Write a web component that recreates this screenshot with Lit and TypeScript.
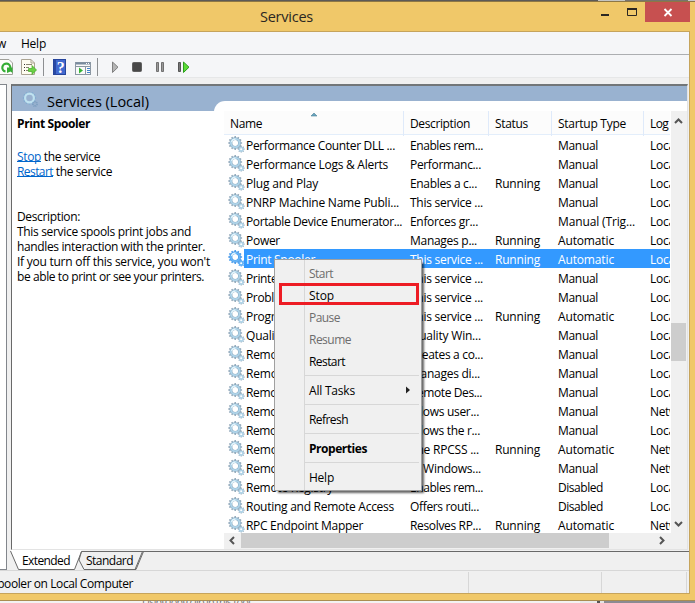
import { LitElement, html, css, svg, nothing } from "lit";
import { customElement, property } from "lit/decorators.js";
import { classMap } from "lit/directives/class-map.js";

/** A single line of text whose letter spacing is adjusted to fill `w` pixels. */
@customElement("fit-text")
class FitText extends LitElement {
  static styles = css`
    :host { display: inline-block; white-space: pre; }
  `;
  @property({ type: Number }) w = 0;
  @property() text = "";
  render() {
    return html`<span>${this.text}</span>`;
  }
  firstUpdated() {
    const span = this.renderRoot.querySelector("span")!;
    const natural = span.getBoundingClientRect().width;
    if (this.w && natural) {
      span.style.letterSpacing = (this.w - natural) / this.text.length + "px";
    }
  }
}

const t = (text: string, w: number) => html`<fit-text .text=${text} .w=${w}></fit-text>`;

const teeth = (n: number, cx: number, cy: number, r1: number, r2: number) =>
  Array.from({ length: n }, (_, i) => {
    const a = (i * 2 * Math.PI) / n;
    return `M${cx + r1 * Math.cos(a)} ${cy + r1 * Math.sin(a)}L${cx + r2 * Math.cos(a)} ${cy + r2 * Math.sin(a)}`;
  }).join("");

@customElement("gear-icon")
class GearIcon extends LitElement {
  static properties = { hot: { type: Boolean } };
  declare hot: boolean;
  static styles = css`
    :host { display: block; width: 17px; height: 17px; }
    svg { display: block; }
  `;
  render() {
    const edge = this.hot ? "#4a9cec" : "#93a9ba";
    const ring = this.hot ? "#66b4f6" : "#aed3e8";
    const rim = this.hot ? "#3a8de0" : "#7f9fb6";
    return html`<svg width="17" height="17" viewBox="0 0 17 17" fill="none">
      <path d=${teeth(12, 7.2, 7, 5, 6.9)} stroke=${edge} stroke-width="1.5" />
      <circle cx="7.2" cy="7" r="4.3" stroke=${rim} stroke-width="2.8" />
      <circle cx="7.2" cy="7" r="4.3" stroke=${ring} stroke-width="2" />
      <path d="M3.6 6a3.8 3.8 0 0 1 4-2.8" stroke="#e4f5fc" stroke-width="1.3" />
      <path d=${teeth(8, 13.2, 13.2, 1.6, 3.4)} stroke=${edge} stroke-width="1.2" />
      <circle cx="13.2" cy="13.2" r="1.8" stroke=${ring} stroke-width="1.5" />
    </svg>`;
  }
}

type Row = [string, number, string, number, string, string, string];
const rows: Row[] = [
  ["Performance Counter DLL ...", 149, "Enables rem...", 73, "", "Manual", "Loca"],
  ["Performance Logs & Alerts", 142, "Performanc...", 71, "", "Manual", "Loca"],
  ["Plug and Play", 72, "Enables a c...", 67, "Running", "Manual", "Loca"],
  ["PNRP Machine Name Publi...", 153, "This service ...", 73, "", "Manual", "Loca"],
  ["Portable Device Enumerator...", 156, "Enforces gr...", 68, "", "Manual (Trig...", "Loca"],
  ["Power", 34, "Manages p...", 67, "Running", "Automatic", "Loca"],
  ["Print Spooler", 69, "This service ...", 73, "Running", "Automatic", "Loca"],
  ["Printer Extensions and Notif...", 155, "This service ...", 73, "", "Manual", "Loca"],
  ["Problem Reports and Soluti...", 152, "This service ...", 73, "", "Manual", "Loca"],
  ["Program Compatibility Assi...", 152, "This service ...", 73, "Running", "Automatic", "Loca"],
  ["Quality Windows Audio Vid...", 154, "Quality Win...", 71, "", "Manual", "Loca"],
  ["Remote Access Auto Conne...", 155, "Creates a co...", 73, "", "Manual", "Loca"],
  ["Remote Access Connection...", 155, "Manages di...", 70, "", "Manual", "Loca"],
  ["Remote Desktop Configurat...", 155, "Remote Des...", 72, "", "Manual", "Loca"],
  ["Remote Desktop Services", 134, "Allows user...", 69, "", "Manual", "Netw"],
  ["Remote Desktop Services U...", 152, "Allows the r...", 70, "", "Manual", "Loca"],
  ["Remote Procedure Call (RPC)", 155, "The RPCSS ...", 69, "Running", "Automatic", "Netw"],
  ["Remote Procedure Call (RP...", 152, "In Windows...", 71, "", "Manual", "Netw"],
  ["Remote Registry", 87, "Enables rem...", 73, "", "Disabled", "Loca"],
  ["Routing and Remote Access", 148, "Offers routi...", 69, "", "Disabled", "Loca"],
  ["RPC Endpoint Mapper", 117, "Resolves RP...", 71, "Running", "Automatic", "Netw"],
];
const startWidth: Record<string, number> = { Manual: 40, Automatic: 56, Disabled: 45, "Manual (Trig...": 77 };

type Item = [string, number, string] | null;
const menu: Item[] = [
  ["Start", 24, "off"],
  ["Stop", 25, "marked"],
  ["Pause", 31, "off"],
  ["Resume", 42, "off"],
  ["Restart", 36, ""],
  null,
  ["All Tasks", 46, "sub"],
  null,
  ["Refresh", 39, ""],
  null,
  ["Properties", 58, "bold"],
  null,
  ["Help", 25, ""],
];

@customElement("app-root")
class AppRoot extends LitElement {
  static styles = css`
    *, *::after { box-sizing: border-box; }
    :host {
      display: flex; flex-direction: column; position: relative; overflow: hidden;
      width: 695px; height: 603px; background: #f0c869; color: #000;
      font: 12px "Open Sans", "Noto Sans", sans-serif;
    }
    svg { display: block; flex: none; }
    .behind { height: 2px; flex: none; background: linear-gradient(90deg, #5c5a58 0 598px, #c4c4c2 598px 625px, #77736e 625px 688px, #c8c8c8 688px); border-bottom: 1px solid #8d7746; }
    .title { height: 29px; flex: none; display: flex; position: relative; }
    .caption { width: 573px; text-align: center; font-size: 14.5px; line-height: 29px; color: #2b2722; }
    .close { width: 45px; height: 20px; background: #c75050; }
    .client { width: 690px; height: 563px; flex: none; display: flex; flex-direction: column; border: solid #c6a45c; border-width: 1px 1px 1px 0; background: #f0f0f0; }
    .menubar { height: 23px; flex: none; background: #f5f6f8; border-bottom: 1px solid #acaeb1; display: flex; line-height: 23px; gap: 15px; }
    .menubar fit-text:first-child { margin-left: -3px; }
    .tools { height: 23px; flex: none; background: #f5f6f8; border-bottom: 1px solid #e6e7e8; }
    .body { height: 492px; flex: none; display: flex; padding-top: 6px; }
    .tree { width: 7px; height: 486px; flex: none; background: #fff; border: solid #82868c; border-width: 1px 1px 1px 0; }
    .pane { width: 677px; margin-left: 4px; display: flex; flex-direction: column; }
    .sheet { height: 466px; flex: none; border: solid #696969; border-width: 2px 1px 1px 1px; border-top-color: #727678; border-right-color: #e3e3e3; border-bottom-color: #e3e3e3; background: #fff; display: flex; flex-direction: column; }
    .split { flex: 1; display: grid; grid-template-columns: 202px 473px; grid-template-rows: 15px 448px; background: linear-gradient(#99b2d0 0 25px, #fff 25px); }
    .head { grid-row: 1 / 3; display: flex; flex-direction: column; }
    .band { height: 25px; flex: none; display: flex; padding: 5px 0 0 9px; }
    .band fit-text { font-size: 14.5px; line-height: 21px; margin: 0 0 0 9px; }
    .info { padding-left: 5px; line-height: 15px; }
    .info div { height: 15px; }
    .info b { display: block; line-height: 26px; }
    .info .links { height: 12px; }
    .info .desc { height: 30px; }
    a { color: #0066cc; height: 13px; display: inline-block; border-bottom: 1px solid #0066cc; }
    .right { grid-row: 2; background: #fff; border-top-left-radius: 11px; padding: 10px 0 0 10px; display: grid; grid-template-columns: 447px 16px; grid-template-rows: 422px 16px; }
    .list { overflow: hidden; width: 446px; }
    .cols { display: grid; grid-template-columns: 180px 85px 63px 92px 60px; width: 480px; height: 24px; border-bottom: 1px solid #e3eefb; background: #fcfcfc; line-height: 25px; }
    .cols > div { border-right: 1px solid #dfeafa; padding-left: 6px; position: relative; }
    .sort { position: absolute; left: 86px; top: 1px; }
    .row { display: grid; grid-template-columns: 20px 160px 85px 63px 92px 60px; width: 480px; height: 19px; line-height: 21px; background: linear-gradient(90deg, #fff 20px, transparent 20px); }
    .row > * { white-space: pre; }
    .row > div { padding-left: 6px; }
    .row > div:nth-child(2) { padding-left: 2px; }
    .row > gear-icon { margin: 1px 0 0 4px; }
    .row.sel { background: linear-gradient(90deg, #fff 20px, #3399ff 20px); color: #fff; }
    .vbar, .hbar { background: #f0f0f0; display: flex; }
    .vbar { flex-direction: column; }
    .vthumb { width: 15px; height: 38px; background: #cdcdcd; margin: 195px 0 0 0; flex: none; }
    .vbar svg:last-child { margin-top: auto; }
    .hbar { grid-column: 1 / 3; }
    .hthumb { width: 368px; height: 15px; background: #cdcdcd; margin-right: 44px; }
    .tabs { height: 20px; flex: none; position: relative; margin-left: -1px; }
    .tabs svg { position: absolute; left: 0; top: 0; }
    .labels { position: relative; display: flex; gap: 16px; padding-left: 12px; line-height: 22px; }
    .status { height: 23px; flex: none; border-top: 1px solid #d7d7d7; display: flex; line-height: 22px; }
    .status div { border-right: 1px solid #d7d7d7; margin-top: 1px; height: 21px; }
    .s1 { width: 469px; line-height: 23px; overflow: hidden; }
    .s1 fit-text { margin-left: -9px; }
    .s2 { width: 133px; }
    .s3 { width: 85px; }
    .below { position: absolute; left: 0; bottom: 0; height: 3px; width: 695px; overflow: hidden; background: linear-gradient(90deg, #f3f3f3 0 580px, #e9e9e9 580px 597px, #555 597px 600px, #e4e4e4 600px 604px, #8b8b92 604px); border-top: 1px solid #aa8d50; }
    .below fit-text { position: absolute; left: 142px; top: -6px; line-height: 14px; font-size: 11px; color: #777; }
    .popup { position: absolute; left: 274px; top: 259px; width: 148px; height: 232px; background: linear-gradient(90deg, #f0f0f0 29px, #d7d7d7 29px 30px, #f0f0f0 30px); border: 1px solid #a0a0a0; box-shadow: 3px 3px 2px -1px rgba(0, 0, 0, 0.6); padding-top: 2px; }
    .item { height: 22px; line-height: 23px; padding-left: 34px; display: flex; position: relative; }
    .off { color: #6d6d6d; }
    .bold { font-weight: 700; }
    .sub svg { margin: 7px 0 0 50px; }
    .marked::after { content: ""; position: absolute; left: 4px; top: -1px; width: 140px; height: 22px; border: 3px solid #ed1c24; }
    .sep { height: 7px; padding: 3px 2px 3px 30px; background: content-box #d7d7d7; }
  `;

  tools() {
    return html`<svg width="300" height="22" viewBox="0 55 300 22" fill="none">
      <path d="M-4 59.500H9L12.500 63V74.500H-4Z" fill="#fdfdfb" stroke="#a0a09a" />
      <path d="M5.500 71.500A4 4 0 1 1 10.300 68" stroke="#35ad35" stroke-width="2.200" />
      <path d="M7 67.500H12.500V73L10.500 71.500L7 73V71Z" fill="#35ad35" />
      <path d="M21.500 59.500H31L34.500 63V74.500H21.500Z" fill="#fefcf0" stroke="#aaa392" />
      <path d="M31 59.500V63H34.500" stroke="#aaa392" />
      <path d="M24 64.500H25M24 67.500H25M24 70.500H25" stroke="#333" />
      <path d="M26 64.500H32M26 67.500H29M26 70.500H29" stroke="#8a8570" />
      <path d="M28.500 68.500H32V65.500L36.500 70L32 74.500V71.500H28.500Z" fill="#6bd045" stroke="#42a928" stroke-width=".7" />
      <path d="M43.500 58V76M97.500 58V76" stroke="#8d8f92" />
      <rect x="53.500" y="59.500" width="12" height="15" fill="#4169cf" stroke="#26459c" />
      <path d="M55 60V74" stroke="#223f96" stroke-width="1.500" />
      <text x="56.800" y="72.500" font-family="Liberation Serif" font-weight="700" font-size="16" fill="#fff">?</text>
      <rect x="75.500" y="62.500" width="15" height="12" fill="#fafafa" stroke="#8b97a3" />
      <path d="M76 63.500H90" stroke="#798b9e" stroke-width="2" />
      <path d="M86 63.500H87M88 63.500H89" stroke="#fff" />
      <path d="M76 66.500H90M85.500 67V74" stroke="#8b97a3" />
      <path d="M87 68.500H90M87 70.500H90M87 72.500H90" stroke="#3f83cc" />
      <path d="M79 67.500L83 70.500L79 73.500Z" fill="#35b535" />
      <path d="M112.500 62V72.500L118 67.200Z" fill="#b5b5b5" stroke="#808080" />
      <rect x="132.500" y="62.500" width="9" height="9" rx="1" fill="#484848" stroke="#606060" />
      <path d="M156.500 62.500H158.500V71.500H156.500ZM161.500 62.500H163.500V71.500H161.500Z" fill="#999" stroke="#717171" />
      <path d="M178.500 62.500H180.500V71.500H178.500Z" fill="#777" stroke="#555" />
      <path d="M183.500 62V72.500L189 67.200Z" fill="#5bdc35" stroke="#2c9f1e" />
    </svg>`;
  }

  chevron(d: string, w: number, h: number) {
    return html`<svg width=${w} height=${h} viewBox="0 0 ${w} ${h}">${svg`<path d=${d} fill="none" stroke="#555" stroke-width="2"/>`}</svg>`;
  }

  render() {
    return html`
      <div class="behind"></div>
      <div class="title">
        <div class="caption">${t("Services", 53)}</div>
        <svg width="72" height="20" viewBox="0 0 72 20" fill="none">
          <path d="M28 13H36" stroke="#2b2722" stroke-width="2" />
          <path d="M54.500 6V13.500H63.500V6" stroke="#2b2722" />
          <path d="M54 7H64" stroke="#2b2722" stroke-width="2" />
        </svg>
        <div class="close">
          <svg width="45" height="20" viewBox="0 0 45 20"><path d="M19.500 7L26.500 14M26.500 7L19.500 14" stroke="#fff" stroke-width="1.800" /></svg>
        </div>
      </div>
      <div class="client">
        <div class="menubar">${t("w", 9)}${t("Help", 25)}</div>
        <div class="tools">${this.tools()}</div>
        <div class="body">
          <div class="tree"></div>
          <div class="pane">
            <div class="sheet">
              <div class="split">
                <div class="head">
                  <div class="band">
                    <svg width="17" height="17" viewBox="0 0 17 17" fill="none">
                      <path d=${teeth(12, 8.5, 7, 4, 6.6)} stroke="#7fabd0" stroke-width="1.500" />
                      <circle cx="8.500" cy="7" r="4.400" stroke="#bfe2f0" stroke-width="2.200" />
                      <circle cx="14" cy="13" r="2" stroke="#7d9fc0" stroke-width="1.900" stroke-dasharray="1 .6" />
                    </svg>
                    ${t("Services (Local)", 102)}
                  </div>
                  <div class="info">
                    <b>${t("Print Spooler", 73)}</b>
                    <div class="links"></div>
                    <div><a>${t("Stop", 24)}</a>${t(" the service", 59)}</div>
                    <div><a>${t("Restart", 36)}</a>${t(" the service", 59)}</div>
                    <div class="desc"></div>
                    <div>${t("Description:", 63)}</div>
                    <div>${t("This service spools print jobs and", 174)}</div>
                    <div>${t("handles interaction with the printer.", 188)}</div>
                    <div>${t("If you turn off this service, you won't", 193)}</div>
                    <div>${t("be able to print or see your printers.", 187)}</div>
                  </div>
                </div>
                <div class="right">
                  <div class="list">
                    <div class="cols">
                      <div>${t("Name", 32)}<svg class="sort" width="9" height="5"><path d="M1 4L4 1L7 4Z" fill="#6aa5c0" stroke="#4c8094" stroke-width=".600" /></svg></div>
                      <div>${t("Description", 60)}</div>
                      <div>${t("Status", 33)}</div>
                      <div>${t("Startup Type", 68)}</div>
                      <div>${t("Log On As", 51)}</div>
                    </div>
                    ${rows.map(([n, nw, d, dw, s, st, l], i) => html`
                      <div class=${classMap({ row: true, sel: i === 6 })}>
                        <gear-icon .hot=${i === 6}></gear-icon>
                        <div>${t(n, nw)}</div>
                        <div>${t(d, dw)}</div>
                        <div>${s ? t(s, 45) : nothing}</div>
                        <div>${t(st, startWidth[st])}</div>
                        <div>${t(l, l === "Loca" ? 25 : 28)}</div>
                      </div>`)}
                  </div>
                  <div class="vbar">
                    ${this.chevron("M4 12L7.500 8.500L11 12", 15, 17)}
                    <div class="vthumb"></div>
                    ${this.chevron("M4 6L7.500 9.500L11 6", 15, 17)}
                  </div>
                  <div class="hbar">
                    ${this.chevron("M10 4L6.500 7.500L10 11", 17, 15)}
                    <div class="hthumb"></div>
                    ${this.chevron("M7 4L10.500 7.500L7 11", 17, 15)}
                  </div>
                </div>
              </div>
            </div>
            <div class="tabs">
              <svg width="679" height="20" viewBox="10 550 679 20" fill="none">
                <path d="M10.500 550L18.500 569.500H74.500L81.500 551.500V550Z" fill="#fff" />
                <path d="M10.500 551L18.500 569.500H74.500L81.500 551.500H689M81.500 551.500L79 560L84 569.500H136L143.500 551.500M135 569.500L142.500 551.500" stroke="#696969" />
              </svg>
              <div class="labels">${t("Extended", 48)}${t("Standard", 47)}</div>
            </div>
          </div>
        </div>
        <div class="status">
          <div class="s1">${t("Spooler on Local Computer", 142)}</div>
          <div class="s2"></div>
          <div class="s3"></div>
        </div>
      </div>
      <div class="below">${t("Using long clip in this tool", 108)}</div>
      <div class="popup">
        ${menu.map((m) => m
          ? html`<div class="item ${m[2]}">${t(m[0], m[1])}${m[2] === "sub"
              ? html`<svg width="6" height="8"><path d="M1 0.500L5 4L1 7.500Z" fill="#222" /></svg>` : nothing}</div>`
          : html`<div class="sep"></div>`)}
      </div>
    `;
  }
}
